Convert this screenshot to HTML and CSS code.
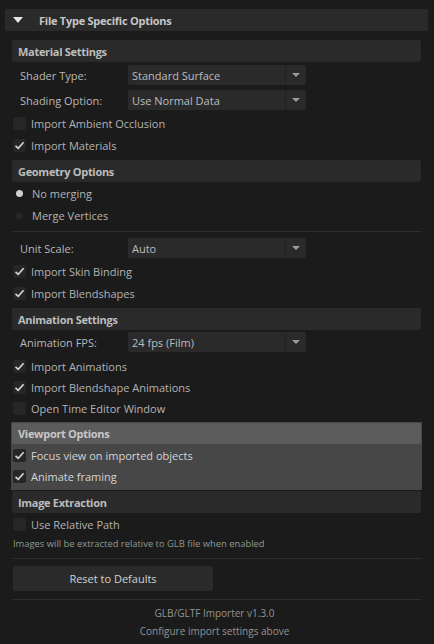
FILE: index.html
```html
<!DOCTYPE html>
<html>
<head>
<meta charset="utf-8">
<link rel="stylesheet" href="styles.css">
</head>
<body>
<div class="panel">
  <div class="main-header"><span class="tri"></span><span class="main-title">File Type Specific Options</span></div>
  <div class="content">
    <div class="sec-header h-material">Material Settings</div>
    <div class="dd-row first"><span class="dd-label">Shader Type:</span><div class="dd"><span class="dd-text">Standard Surface</span><span class="dd-btn"><span class="dd-arrow"></span></span></div></div>
    <div class="dd-row"><span class="dd-label">Shading Option:</span><div class="dd"><span class="dd-text">Use Normal Data</span><span class="dd-btn"><span class="dd-arrow"></span></span></div></div>
    <div class="cb-row after-dd"><span class="cb"></span><span class="cb-label">Import Ambient Occlusion</span></div>
    <div class="cb-row gap1"><span class="cb checked"><svg viewBox="0 0 13 13" width="13" height="13"><path d="M2.5 6.8 L5.2 9.4 L10.6 3.2" fill="none" stroke="#d6d6d6" stroke-width="1.6"/></svg></span><span class="cb-label">Import Materials</span></div>

    <div class="sec-header h-geom">Geometry Options</div>
    <div class="radio-row"><span class="radio on"></span><span class="cb-label">No merging</span></div>
    <div class="radio-row"><span class="radio"></span><span class="cb-label">Merge Vertices</span></div>
    <div class="sep sep-geom"></div>
    <div class="dd-row unit"><span class="dd-label">Unit Scale:</span><div class="dd"><span class="dd-text">Auto</span><span class="dd-btn"><span class="dd-arrow"></span></span></div></div>
    <div class="cb-row after-dd"><span class="cb checked"><svg viewBox="0 0 13 13" width="13" height="13"><path d="M2.5 6.8 L5.2 9.4 L10.6 3.2" fill="none" stroke="#d6d6d6" stroke-width="1.6"/></svg></span><span class="cb-label">Import Skin Binding</span></div>
    <div class="cb-row gap1"><span class="cb checked"><svg viewBox="0 0 13 13" width="13" height="13"><path d="M2.5 6.8 L5.2 9.4 L10.6 3.2" fill="none" stroke="#d6d6d6" stroke-width="1.6"/></svg></span><span class="cb-label">Import Blendshapes</span></div>

    <div class="sec-header h-anim">Animation Settings</div>
    <div class="dd-row anim"><span class="dd-label">Animation FPS:</span><div class="dd"><span class="dd-text">24 fps (Film)</span><span class="dd-btn"><span class="dd-arrow"></span></span></div></div>
    <div class="cb-row after-dd4"><span class="cb checked"><svg viewBox="0 0 13 13" width="13" height="13"><path d="M2.5 6.8 L5.2 9.4 L10.6 3.2" fill="none" stroke="#d6d6d6" stroke-width="1.6"/></svg></span><span class="cb-label">Import Animations</span></div>
    <div class="cb-row"><span class="cb checked"><svg viewBox="0 0 13 13" width="13" height="13"><path d="M2.5 6.8 L5.2 9.4 L10.6 3.2" fill="none" stroke="#d6d6d6" stroke-width="1.6"/></svg></span><span class="cb-label">Import Blendshape Animations</span></div>
    <div class="cb-row"><span class="cb"></span><span class="cb-label">Open Time Editor Window</span></div>

    <div class="viewport">
      <div class="sec-header vp-header">Viewport Options</div>
      <div class="cb-row vp-first"><span class="cb checked"><svg viewBox="0 0 13 13" width="13" height="13"><path d="M2.5 6.8 L5.2 9.4 L10.6 3.2" fill="none" stroke="#d6d6d6" stroke-width="1.6"/></svg></span><span class="cb-label bright">Focus view on imported objects</span></div>
      <div class="cb-row"><span class="cb checked"><svg viewBox="0 0 13 13" width="13" height="13"><path d="M2.5 6.8 L5.2 9.4 L10.6 3.2" fill="none" stroke="#d6d6d6" stroke-width="1.6"/></svg></span><span class="cb-label bright">Animate framing</span></div>
    </div>

    <div class="sec-header h-img">Image Extraction</div>
    <div class="cb-row gap1"><span class="cb"></span><span class="cb-label">Use Relative Path</span></div>
    <div class="info">Images will be extracted relative to GLB file when enabled</div>
    <div class="sep sep-info"></div>
    <button class="reset">Reset to Defaults</button>
    <div class="sep sep-reset"></div>
    <div class="footer">
      <div class="foot-line">GLB/GLTF Importer v1.3.0</div>
      <div class="foot-line">Configure import settings above</div>
    </div>
  </div>
</div>
</body>
</html>
```

FILE: styles.css
```css
*, *::before, *::after {
  box-sizing: border-box;
}

html, body {
  margin: 0;
  padding: 0;
  background: #1b1b1b;
  width: 434px;
  height: 644px;
  overflow: hidden;
}

body {
  font-family: "Open Sans", "Noto Sans", sans-serif;
  font-size: 11px;
  color: #b8b8b8;
}

.panel {
  padding: 9px 6px 0 5px;
}

.main-header {
  height: 22px;
  background: #2a2a2a;
  border-radius: 2px;
  display: flex;
  align-items: center;
}

.tri {
  width: 0;
  height: 0;
  margin-left: 8px;
  border-left: 5.5px solid transparent;
  border-right: 5.5px solid transparent;
  border-top: 6px solid #e6e6e6;
  margin-top: -1px;
}

.main-title {
  margin-left: 16px;
  font-weight: 700;
  letter-spacing: -0.25px;
  color: #c6c6c6;
}

.content {
  display: flex;
  flex-direction: column;
  padding: 0 7px 0 7px;
}

.sec-header {
  height: 22px;
  background: #2a2a2a;
  border-radius: 2px;
  display: flex;
  align-items: center;
  padding-left: 6px;
  font-weight: 700;
  letter-spacing: -0.3px;
  color: #bdbdbd;
}

.h-material { margin-top: 9px; }
.h-geom { margin-top: 4px; }
.h-anim { margin-top: 4px; }
.h-img { margin-top: 1px; }

.dd-row {
  height: 20px;
  display: flex;
  align-items: center;
  margin-top: 5px;
}
.dd-row.first { margin-top: 3px; }
.dd-row.unit { margin-top: 6px; }
.dd-row.anim { margin-top: 2px; }

.dd-label {
  width: 116px;
  padding-left: 8px;
}

.dd {
  width: 178px;
  height: 20px;
  background: #2a2a2a;
  border-radius: 2px;
  display: flex;
  align-items: center;
}

.dd-text {
  flex: 1;
  padding-left: 4px;
  color: #bcbcbc;
}

.dd-btn {
  width: 21px;
  height: 20px;
  border-left: 1px solid #222222;
  display: flex;
  align-items: center;
  justify-content: center;
}

.dd-arrow {
  width: 0;
  height: 0;
  border-left: 4px solid transparent;
  border-right: 4px solid transparent;
  border-top: 4px solid #9c9c9c;
}

.cb-row {
  height: 21px;
  display: flex;
  align-items: center;
}
.cb-row.after-dd { margin-top: 3px; }
.cb-row.after-dd4 { margin-top: 4px; }
.cb-row.gap1 { margin-top: 1px; }

.cb {
  width: 13px;
  height: 13px;
  margin-left: 1px;
  background: #262626;
  border-radius: 2px;
  display: flex;
}

.cb-label {
  margin-left: 5px;
  color: #b3b3b3;
}
.cb-label.bright { color: #d4d4d4; }

.radio-row {
  height: 22px;
  display: flex;
  align-items: center;
}

.radio {
  width: 7px;
  height: 7px;
  border-radius: 50%;
  background: #262626;
  margin-left: 4px;
  margin-right: 4px;
}
.radio.on { background: #cfcfcf; }

.sep {
  height: 1px;
  background: #303030;
  margin-left: 1px;
}
.sep-geom { margin-top: 5px; }
.sep-info { margin-top: 7px; }
.sep-reset { margin-top: 8px; }

.viewport {
  margin: 3px 0 0 -1px;
  width: 411px;
  background: #474747;
  padding: 1px 0 3px 1px;
}

.vp-header {
  height: 21px;
  width: 409px;
  background: #5c5c5c;
  color: #c8c8c8;
}

.vp-first { margin-top: 1px; }

.info {
  margin-top: 2px;
  height: 14px;
  line-height: 14px;
  font-size: 9.4px;
  color: #8f9a90;
  padding-left: 1px;
}

.reset {
  margin: 7px 0 0 1px;
  width: 200px;
  height: 25px;
  background: #2a2a2a;
  border: none;
  border-radius: 2px;
  color: #d2d2d2;
  font-family: "Open Sans", "Noto Sans", sans-serif;
  font-size: 11px;
  padding: 0;
}

.footer {
  margin-top: 4px;
  text-align: center;
  padding-right: 4px;
}

.foot-line {
  height: 18px;
  line-height: 18px;
  font-size: 10px;
  color: #939393;
}
```
